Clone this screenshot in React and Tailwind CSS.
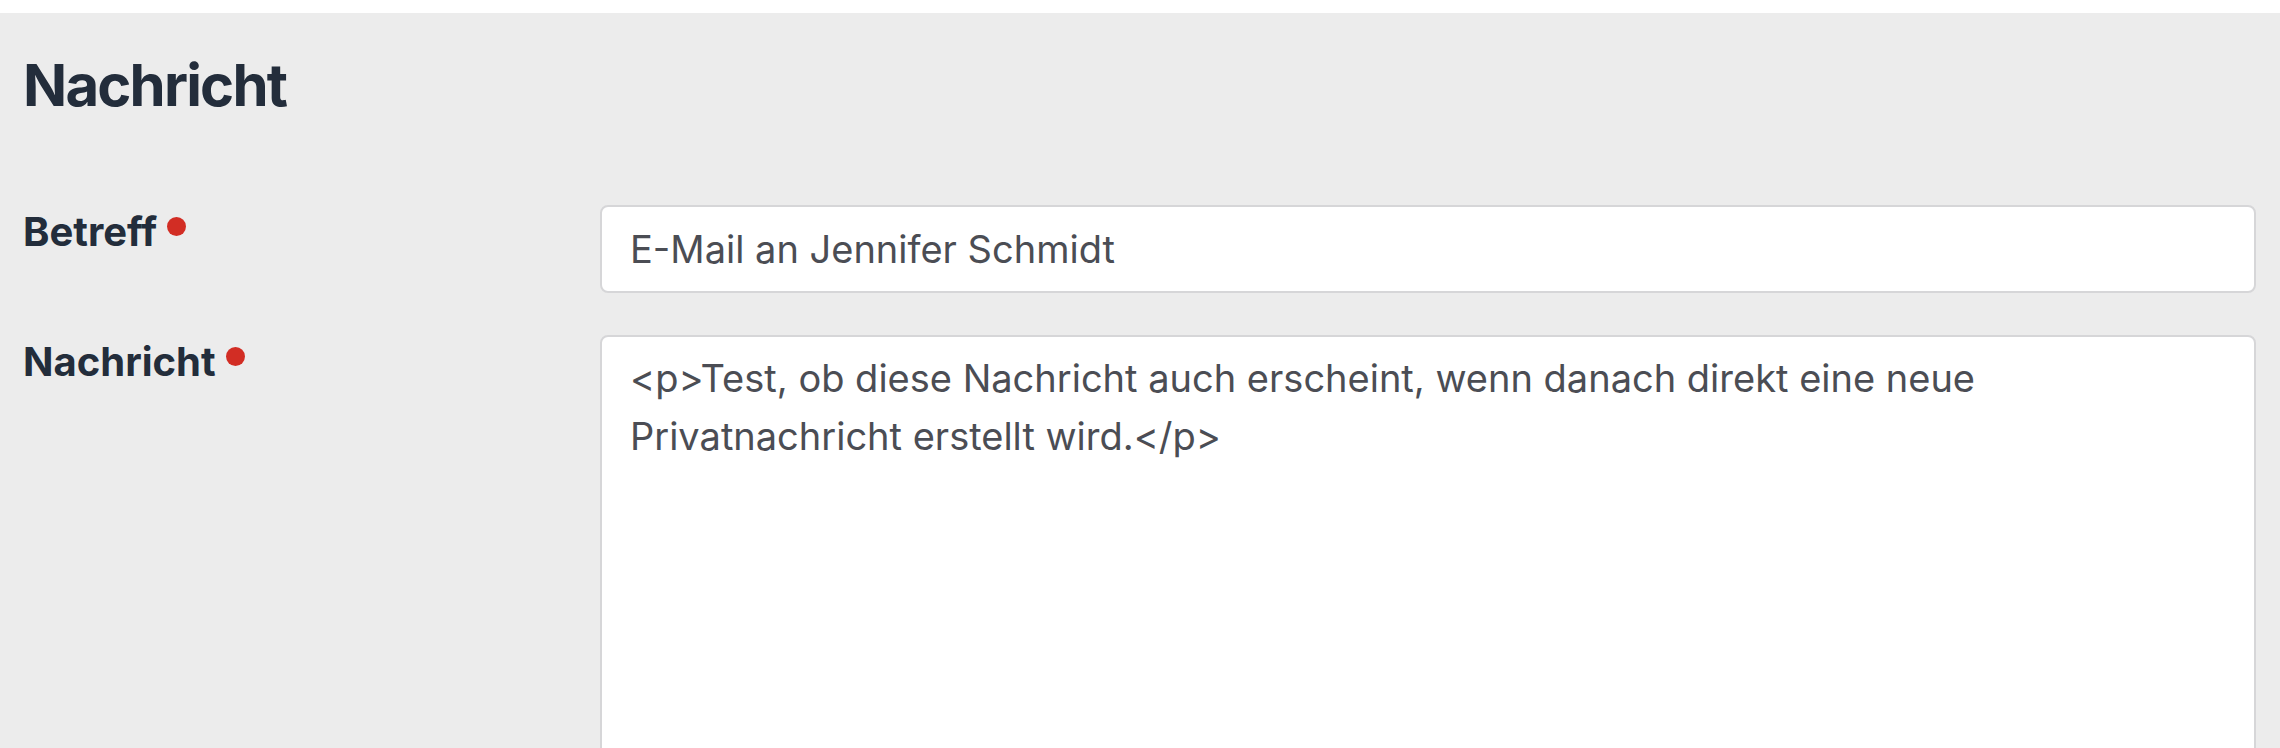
import React from "react";

function Label({ children }) {
  return (
    <div className="flex items-start pt-[3px]">
      <span className="text-[40px] leading-[48px] font-bold text-[#232d3b]">{children}</span>
      <span className="ml-[10px] mt-[9px] h-[19px] w-[19px] rounded-full bg-[#d22d24]" />
    </div>
  );
}

export default function App() {
  return (
    <div className="h-[748px] overflow-hidden bg-white" style={{ fontFamily: "Inter, 'Noto Sans', sans-serif" }}>
      <div className="mt-[13px] h-[735px] bg-[#ececec] pl-[23px] pr-[24px] pt-[37px]">
        <h2 className="text-[58px] leading-[70px] font-bold text-[#232d3b] tracking-[-1.8px]">Nachricht</h2>
        <div className="mt-[85px] grid grid-cols-[577px_1fr] gap-y-[42px]">
          <Label>Betreff</Label>
          <input
            type="text"
            defaultValue="E-Mail an Jennifer Schmidt"
            className="h-[88px] w-full rounded-[8px] border-2 border-[#d6d6d8] bg-white pl-[28px] pr-[31px] text-[38px] leading-[57px] text-[#4b4d54] outline-none"
          />
          <Label>Nachricht</Label>
          <textarea
            defaultValue="<p>Test, ob diese Nachricht auch erscheint, wenn danach direkt eine neue Privatnachricht erstellt wird.</p>"
            className="h-[480px] w-full resize-none rounded-[8px] border-2 border-[#d6d6d8] bg-white pl-[28px] pr-[31px] pt-[12px] text-[38px] leading-[58px] text-[#4b4d54] outline-none"
          />
        </div>
      </div>
    </div>
  );
}
